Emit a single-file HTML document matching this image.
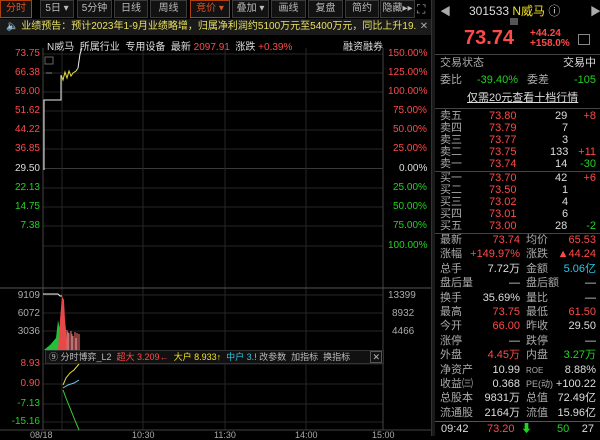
<!DOCTYPE html><html><head><meta charset="utf-8"><style>
*{margin:0;padding:0;box-sizing:border-box}
body{width:600px;height:436px;background:#000;overflow:hidden;font-family:"Liberation Sans","Noto Sans CJK SC",sans-serif;font-size:10px;color:#ccc;position:relative}
.a{position:absolute;white-space:nowrap}
.r{color:#ff4a4a}.g{color:#22d322}.y{color:#f0e020}.c{color:#28c8e8}.w{color:#ddd}.gr{color:#aaa}
.tb{position:absolute;top:0;height:18px;border:1px solid #3a3a3a;background:#121212;color:#bbb;font-size:10px;line-height:16px;text-align:center}
.row{position:absolute;left:437px;width:161px;height:13px;font-size:11px;line-height:13px}
.row span{position:absolute}
</style></head><body>
<div class="tb" style="left:0;width:32px;border-color:#b04010;color:#e05020">分时</div>
<div class="tb" style="left:40px;width:34px">5日 ▾</div>
<div class="tb" style="left:77px;width:35px">5分钟</div>
<div class="tb" style="left:114px;width:34px">日线</div>
<div class="tb" style="left:150px;width:37px">周线</div>
<div class="tb" style="left:190px;width:40px;border-color:#b04010;color:#e05020">竞价 ▾</div>
<div class="tb" style="left:232px;width:37px">叠加 ▾</div>
<div class="tb" style="left:271px;width:35px">画线</div>
<div class="tb" style="left:308px;width:35px">复盘</div>
<div class="tb" style="left:345px;width:34px">简约</div>
<div class="tb" style="left:380px;width:35px">隐藏▸▸</div>
<div class="a gr" style="left:417px;top:2px;font-size:12px">⛶</div>
<div class="a" style="left:0;top:19px;width:432px;height:16px;background:#1a1a1a;color:#e8e060;font-size:10px;line-height:16px;padding-left:6px;overflow:hidden">🔈 业绩预告：预计2023年1-9月业绩略增，归属净利润约5100万元至5400万元，同比上升19.40<span style="position:absolute;right:0;top:0;width:16px;text-align:center;background:#1a1a1a;color:#aaa">✕</span></div>
<div class="a w" style="left:47px;top:38px;font-size:10px">N威马 &nbsp;所属行业 &nbsp;专用设备 &nbsp;最新 <span class="r">2097.91</span> &nbsp;涨跌 <span class="r">+0.39%</span></div>
<div class="a w" style="left:343px;top:38px">融资融券</div>
<svg class="a" style="left:0;top:0" width="432" height="436">
<g stroke="#262626" stroke-width="1">
<line x1="43" y1="54" x2="383" y2="54"/><line x1="43" y1="73" x2="383" y2="73"/><line x1="43" y1="92" x2="383" y2="92"/><line x1="43" y1="111" x2="383" y2="111"/><line x1="43" y1="130" x2="383" y2="130"/><line x1="43" y1="149" x2="383" y2="149"/><line x1="43" y1="168.5" x2="383" y2="168.5" stroke="#3a3a3a"/><line x1="43" y1="188" x2="383" y2="188"/><line x1="43" y1="207" x2="383" y2="207"/><line x1="43" y1="226" x2="383" y2="226"/><line x1="43" y1="246" x2="383" y2="246"/>
<line x1="43" y1="295" x2="383" y2="295"/><line x1="43" y1="313" x2="383" y2="313"/><line x1="43" y1="331" x2="383" y2="331"/>
<line x1="43" y1="364" x2="383" y2="364"/><line x1="43" y1="384" x2="383" y2="384"/><line x1="43" y1="404" x2="383" y2="404"/><line x1="43" y1="422" x2="383" y2="422"/>
<line x1="62" y1="48" x2="62" y2="430"/><line x1="143" y1="48" x2="143" y2="430"/><line x1="225" y1="48" x2="225" y2="430"/><line x1="306" y1="48" x2="306" y2="430"/>
<line x1="43" y1="48" x2="43" y2="430" stroke="#444"/><line x1="383" y1="48" x2="383" y2="430" stroke="#444"/>
<line x1="0" y1="288" x2="432" y2="288" stroke="#555"/><line x1="0" y1="430" x2="432" y2="430" stroke="#444"/>
</g>
<rect x="45" y="57" width="8" height="7" fill="none" stroke="#666"/>
<line x1="46" y1="73" x2="52" y2="73" stroke="#888"/>
<polyline points="44,170 44,100 61,100 61,75" fill="none" stroke="#eee" stroke-width="1"/>
<polyline points="61,75 63,80 65,72 67,78 69,71 71,76 73,73 76,71 78,68" fill="none" stroke="#e8e040"/>
<polyline points="78,68 80,54 82,48" fill="none" stroke="#eee"/>
<polyline points="43,294 58,294 60,296 62,296" stroke="#eee" fill="none"/>
<path d="M44,350 L50,345 L56,338 L58,320 L60,330 L62,296 L63,350Z" fill="#22c03a"/>
<path d="M58,350 L60,320 L62,296 L64,300 L65,320 L66,330 L67,350Z" fill="#e84848"/>
<g stroke="#e86060" stroke-width="1.2"><line x1="67" y1="350" x2="67" y2="330"/><line x1="69" y1="350" x2="69" y2="333"/><line x1="71" y1="350" x2="71" y2="331"/><line x1="73" y1="350" x2="73" y2="336"/><line x1="75" y1="350" x2="75" y2="332"/><line x1="77" y1="350" x2="77" y2="333"/><line x1="79" y1="350" x2="79" y2="334"/></g>
<g stroke="#888" stroke-width="1"><line x1="68" y1="350" x2="68" y2="332"/><line x1="72" y1="350" x2="72" y2="334"/><line x1="76" y1="350" x2="76" y2="338"/></g>
<polyline points="63,385 66,378 70,373 74,370 79,364" fill="none" stroke="#e8e040"/>
<polyline points="63,388 68,385 74,383 79,380" fill="none" stroke="#6cc8e8"/>
<polyline points="63,390 66,398 70,408 74,418 79,430" fill="none" stroke="#3ad03a"/>
</svg>
<div class="a r" style="left:4px;top:48px;width:36px;text-align:right">73.75</div>
<div class="a r" style="left:4px;top:67px;width:36px;text-align:right">66.38</div>
<div class="a r" style="left:4px;top:86px;width:36px;text-align:right">59.00</div>
<div class="a r" style="left:4px;top:105px;width:36px;text-align:right">51.62</div>
<div class="a r" style="left:4px;top:124px;width:36px;text-align:right">44.22</div>
<div class="a r" style="left:4px;top:143px;width:36px;text-align:right">36.85</div>
<div class="a w" style="left:4px;top:163px;width:36px;text-align:right">29.50</div>
<div class="a g" style="left:4px;top:182px;width:36px;text-align:right">22.13</div>
<div class="a g" style="left:4px;top:201px;width:36px;text-align:right">14.75</div>
<div class="a g" style="left:4px;top:220px;width:36px;text-align:right">7.38</div>
<div class="a gr" style="left:4px;top:290px;width:36px;text-align:right">9109</div>
<div class="a gr" style="left:4px;top:308px;width:36px;text-align:right">6072</div>
<div class="a gr" style="left:4px;top:326px;width:36px;text-align:right">3036</div>
<div class="a r" style="left:4px;top:358px;width:36px;text-align:right">8.93</div>
<div class="a r" style="left:4px;top:378px;width:36px;text-align:right">0.90</div>
<div class="a g" style="left:4px;top:398px;width:36px;text-align:right">-7.13</div>
<div class="a g" style="left:0px;top:416px;width:40px;text-align:right">-15.16</div>
<div class="a r" style="left:388px;top:48px">150.00%</div>
<div class="a r" style="left:388px;top:67px">125.00%</div>
<div class="a r" style="left:388px;top:86px">100.00%</div>
<div class="a r" style="left:393px;top:105px">75.00%</div>
<div class="a r" style="left:393px;top:124px">50.00%</div>
<div class="a r" style="left:393px;top:143px">25.00%</div>
<div class="a w" style="left:399px;top:163px">0.00%</div>
<div class="a g" style="left:393px;top:182px">25.00%</div>
<div class="a g" style="left:393px;top:201px">50.00%</div>
<div class="a g" style="left:393px;top:220px">75.00%</div>
<div class="a g" style="left:388px;top:240px">100.00%</div>
<div class="a gr" style="left:388px;top:290px">13399</div>
<div class="a gr" style="left:392px;top:308px">8932</div>
<div class="a gr" style="left:392px;top:326px">4466</div>
<div class="a" style="left:45px;top:350px;width:339px;height:14px;background:#111;border:1px solid #333;font-size:9px;line-height:12px;padding-left:3px;color:#bbb;overflow:hidden">⑨ 分时博弈_L2 &nbsp;<span class="r">超大 3.209←</span> &nbsp;<span class="y">大户 8.933↑</span> &nbsp;<span class="c">中户 3.</span>! 改参数 &nbsp;加指标 &nbsp;换指标<span style="position:absolute;right:1px;top:0;background:#111;border:1px solid #555;line-height:10px;padding:0 1px">✕</span></div>
<div class="a gr" style="left:30px;top:430px;font-size:9px">08/18</div>
<div class="a gr" style="left:132px;top:430px;font-size:9px">10:30</div>
<div class="a gr" style="left:214px;top:430px;font-size:9px">11:30</div>
<div class="a gr" style="left:295px;top:430px;font-size:9px">14:00</div>
<div class="a gr" style="left:372px;top:430px;font-size:9px">15:00</div>
<div class="a" style="left:431px;top:0;width:4px;height:436px;background:#1a1a1a;border-left:1px solid #333"></div>
<div class="a gr" style="left:440px;top:3px;font-size:11px">◀</div>
<div class="a gr" style="left:590px;top:3px;font-size:11px">▶</div>
<div class="a w" style="left:469px;top:2px;font-size:12px">301533 <span class="y">N威马</span> ⓘ</div>
<div class="a" style="left:510px;top:18px;width:8px;height:7px;background:#555"></div>
<div class="a r" style="left:464px;top:27px;font-size:20px;font-weight:bold">73.74</div>
<div class="a r" style="left:530px;top:29px;font-size:10px;line-height:10px;font-weight:bold">+44.24<br>+158.0%</div>
<div class="a" style="left:578px;top:34px;width:12px;height:11px;border:1px solid #888"></div>
<div class="a" style="left:435px;top:54px;width:165px;border-top:1px solid #444"></div>
<div class="row" style="top:57px"><span class="gr" style="left:3px">交易状态</span><span class="w" style="right:2px">交易中</span></div>
<div class="row" style="top:74px"><span class="gr" style="left:3px">委比</span><span class="g" style="left:40px">-39.40%</span><span class="gr" style="left:90px">委差</span><span class="g" style="right:2px">-105</span></div>
<div class="row" style="top:92px"><span class="w" style="left:30px;text-decoration:underline">仅需20元查看十档行情</span></div>
<div class="a" style="left:435px;top:108px;width:165px;border-top:1px solid #444"></div>
<div class="row" style="top:110px"><span class="gr" style="left:3px">卖五</span><span class="r" style="left:52px">73.80</span><span class="w" style="left:118px">29</span><span class="r" style="right:2px">+8</span></div>
<div class="row" style="top:122px"><span class="gr" style="left:3px">卖四</span><span class="r" style="left:52px">73.79</span><span class="w" style="left:125px">7</span></div>
<div class="row" style="top:134px"><span class="gr" style="left:3px">卖三</span><span class="r" style="left:52px">73.77</span><span class="w" style="left:125px">3</span></div>
<div class="row" style="top:146px"><span class="gr" style="left:3px">卖二</span><span class="r" style="left:52px">73.75</span><span class="w" style="left:113px">133</span><span class="r" style="right:2px">+11</span></div>
<div class="row" style="top:158px"><span class="gr" style="left:3px">卖一</span><span class="r" style="left:52px">73.74</span><span class="w" style="left:118px">14</span><span class="g" style="right:2px">-30</span></div>
<div class="a" style="left:435px;top:171px;width:165px;border-top:1px solid #444"></div>
<div class="row" style="top:172px"><span class="gr" style="left:3px">买一</span><span class="r" style="left:52px">73.70</span><span class="w" style="left:118px">42</span><span class="r" style="right:2px">+6</span></div>
<div class="row" style="top:184px"><span class="gr" style="left:3px">买二</span><span class="r" style="left:52px">73.50</span><span class="w" style="left:125px">1</span></div>
<div class="row" style="top:196px"><span class="gr" style="left:3px">买三</span><span class="r" style="left:52px">73.02</span><span class="w" style="left:125px">4</span></div>
<div class="row" style="top:208px"><span class="gr" style="left:3px">买四</span><span class="r" style="left:52px">73.01</span><span class="w" style="left:125px">6</span></div>
<div class="row" style="top:220px"><span class="gr" style="left:3px">买五</span><span class="r" style="left:52px">73.00</span><span class="w" style="left:118px">28</span><span class="g" style="right:2px">-2</span></div>
<div class="a" style="left:435px;top:233px;width:165px;border-top:1px solid #444"></div>
<div class="row" style="top:234px"><span class="gr" style="left:3px">最新</span><span class="r" style="right:78px">73.74</span><span class="gr" style="left:89px">均价</span><span class="r" style="right:2px">65.53</span></div>
<div class="row" style="top:248px"><span class="gr" style="left:3px">涨幅</span><span class="r" style="right:78px">+149.97%</span><span class="gr" style="left:89px">涨跌</span><span class="r" style="right:2px">▲44.24</span></div>
<div class="row" style="top:263px"><span class="gr" style="left:3px">总手</span><span class="w" style="right:78px">7.72万</span><span class="gr" style="left:89px">金额</span><span class="c" style="right:2px">5.06亿</span></div>
<div class="row" style="top:277px"><span class="gr" style="left:3px">盘后量</span><span class="w" style="right:78px">—</span><span class="gr" style="left:89px">盘后额</span><span class="w" style="right:2px">—</span></div>
<div class="row" style="top:292px"><span class="gr" style="left:3px">换手</span><span class="w" style="right:78px">35.69%</span><span class="gr" style="left:89px">量比</span><span class="w" style="right:2px">—</span></div>
<div class="row" style="top:306px"><span class="gr" style="left:3px">最高</span><span class="r" style="right:78px">73.75</span><span class="gr" style="left:89px">最低</span><span class="r" style="right:2px">61.50</span></div>
<div class="row" style="top:320px"><span class="gr" style="left:3px">今开</span><span class="r" style="right:78px">66.00</span><span class="gr" style="left:89px">昨收</span><span class="w" style="right:2px">29.50</span></div>
<div class="row" style="top:335px"><span class="gr" style="left:3px">涨停</span><span class="w" style="right:78px">—</span><span class="gr" style="left:89px">跌停</span><span class="w" style="right:2px">—</span></div>
<div class="row" style="top:349px"><span class="gr" style="left:3px">外盘</span><span class="r" style="right:78px">4.45万</span><span class="gr" style="left:89px">内盘</span><span class="g" style="right:2px">3.27万</span></div>
<div class="row" style="top:364px"><span class="gr" style="left:3px">净资产</span><span class="w" style="right:78px">10.99</span><span class="gr" style="left:89px;font-size:8px">ROE</span><span class="w" style="right:2px">8.88%</span></div>
<div class="row" style="top:378px"><span class="gr" style="left:3px">收益㈢</span><span class="w" style="right:78px">0.368</span><span class="gr" style="left:89px;font-size:9px">PE(动)</span><span class="w" style="right:2px">+100.22</span></div>
<div class="row" style="top:392px"><span class="gr" style="left:3px">总股本</span><span class="w" style="right:78px">9831万</span><span class="gr" style="left:89px">总值</span><span class="w" style="right:2px">72.49亿</span></div>
<div class="row" style="top:407px"><span class="gr" style="left:3px">流通股</span><span class="w" style="right:78px">2164万</span><span class="gr" style="left:89px">流值</span><span class="w" style="right:2px">15.96亿</span></div>
<div class="a" style="left:435px;top:421px;width:165px;border-top:1px solid #555"></div>
<div class="row" style="top:423px"><span class="w" style="left:4px">09:42</span><span class="r" style="left:50px">73.20</span><span class="g" style="left:84px">⬇</span><span class="g" style="left:120px">50</span><span class="w" style="right:4px">27</span></div>
</body></html>
